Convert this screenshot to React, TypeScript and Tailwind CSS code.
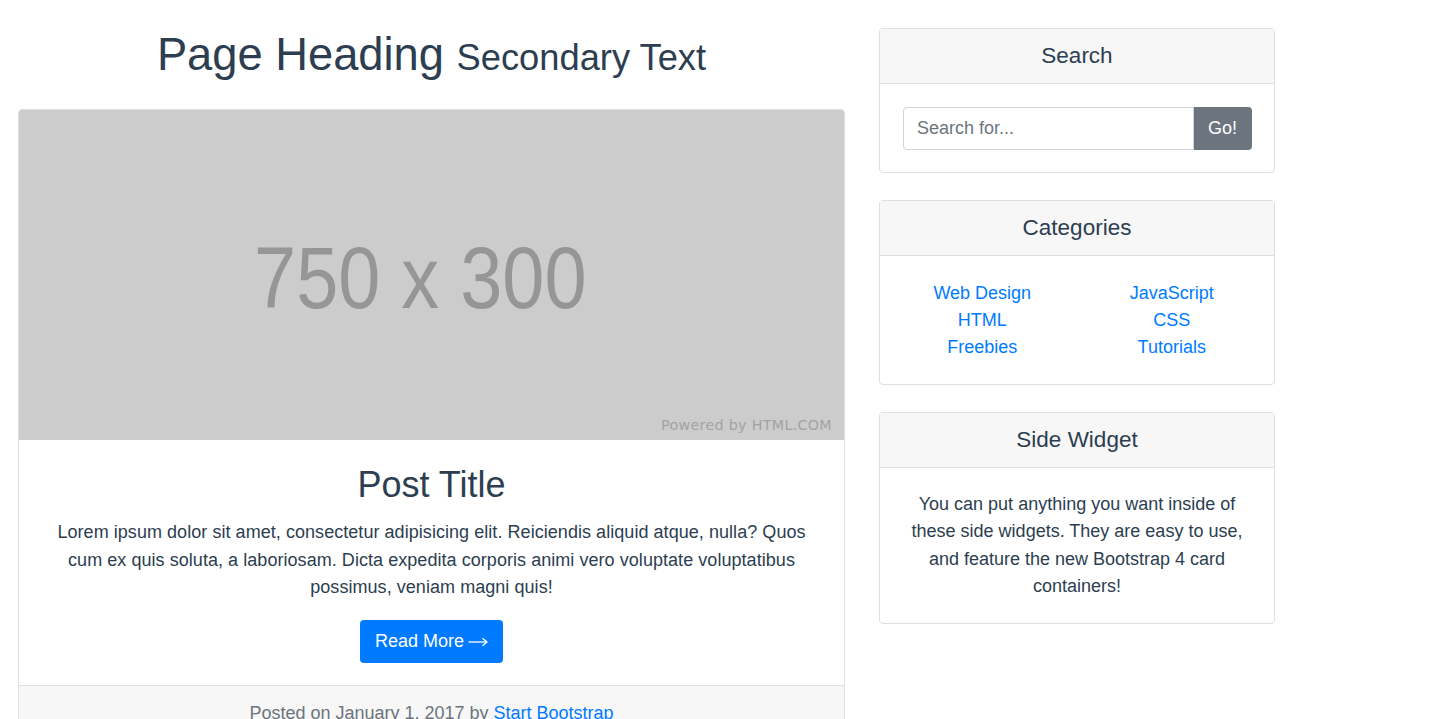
import React from "react";

function Card({ title, children }: { title: string; children: React.ReactNode }) {
  return (
    <div className="rounded-[4px] border border-[#dfdfdf] bg-white">
      <div className="border-b border-[#dfdfdf] bg-[#f7f7f7] px-[22.5px] pb-[14px] pt-[13px] text-center text-[22.5px] leading-[1.2] text-[#2c3e50]">
        {title}
      </div>
      <div className="p-[22.5px]">{children}</div>
    </div>
  );
}

export default function App() {
  const cats = [
    ["Web Design", "HTML", "Freebies"],
    ["JavaScript", "CSS", "Tutorials"],
  ];
  return (
    <div className="min-h-screen bg-white font-['Liberation_Sans',Arial,sans-serif] text-[18px] leading-[1.5] text-[#2c3e50]">
      <div className="flex items-start gap-[34px] pl-[18px]">
        <main className="w-[827px] text-center">
          <h1 className="mb-[27px] mt-[28px] text-[45.3px] leading-[1.2] font-normal">
            Page Heading <small className="text-[36.3px]">Secondary Text</small>
          </h1>
          <div className="overflow-hidden rounded-[4px] border border-[#dfdfdf] bg-white">
            <div className="relative flex h-[330px] items-center justify-center bg-[#cccccc] pr-[22px] pt-[6px]">
              <span className="inline-block origin-center scale-x-[0.86] text-[88px] leading-none text-[#969696]">
                750 x 300
              </span>
              <span className="absolute bottom-[4px] right-[12px] font-['DejaVu_Sans',sans-serif] text-[14.3px] tracking-[0.3px] text-[#a3a3a3]">
                Powered by HTML.COM
              </span>
            </div>
            <div className="px-[37px] pb-[22.5px] pt-[22.5px]">
              <h2 className="mb-[13px] text-[36px] leading-[1.2] font-normal">Post Title</h2>
              <p className="mb-[18px] leading-[27.5px] tracking-[0.05px]">
                Lorem ipsum dolor sit amet, consectetur adipisicing elit. Reiciendis aliquid atque, nulla? Quos cum
                ex quis soluta, a laboriosam. Dicta expedita corporis animi vero voluptate voluptatibus possimus,
                veniam magni quis!
              </p>
              <a className="inline-flex h-[43px] items-center gap-[4px] rounded-[4px] bg-[#007bff] px-[15px] text-[18px] leading-[27px] text-white">
                Read More
                <svg width="20" height="10" viewBox="0 0 20 10" className="mt-[2px]" fill="none" stroke="white" strokeWidth="1.3">
                  <path d="M0.5 5H19" />
                  <path d="M14.5 1.2L19 5L14.5 8.8" />
                </svg>
              </a>
            </div>
            <div className="border-t border-[#dfdfdf] bg-[#f7f7f7] px-[22.5px] py-[13.5px] text-[#6c757d]">
              Posted on January 1, 2017 by <a className="text-[#007bff]">Start Bootstrap</a>
            </div>
          </div>
        </main>
        <aside className="flex w-[396px] flex-col gap-[27px] pt-[28px]">
          <Card title="Search">
            <div className="flex">
              <input
                className="h-[43px] min-w-0 flex-1 rounded-l-[4px] border border-[#ced4da] px-[13.5px] text-[18px] text-[#495057] outline-none placeholder:text-[#6c757d]"
                placeholder="Search for..."
              />
              <button className="h-[43px] w-[58px] rounded-r-[4px] bg-[#6c757d] text-[18px] text-white">Go!</button>
            </div>
          </Card>
          <Card title="Categories">
            <div className="mx-[-15px] flex pb-[1px] pt-[1px]">
              {cats.map((col, i) => (
                <ul key={i} className="w-1/2 px-[15px] text-center leading-[27px]">
                  {col.map((c) => (
                    <li key={c}>
                      <a className="text-[#007bff]">{c}</a>
                    </li>
                  ))}
                </ul>
              ))}
            </div>
          </Card>
          <Card title="Side Widget">
            <p className="text-center leading-[27.5px]">
              You can put anything you want inside of these side widgets. They are easy to use, and feature the new
              Bootstrap 4 card containers!
            </p>
          </Card>
        </aside>
      </div>
    </div>
  );
}
